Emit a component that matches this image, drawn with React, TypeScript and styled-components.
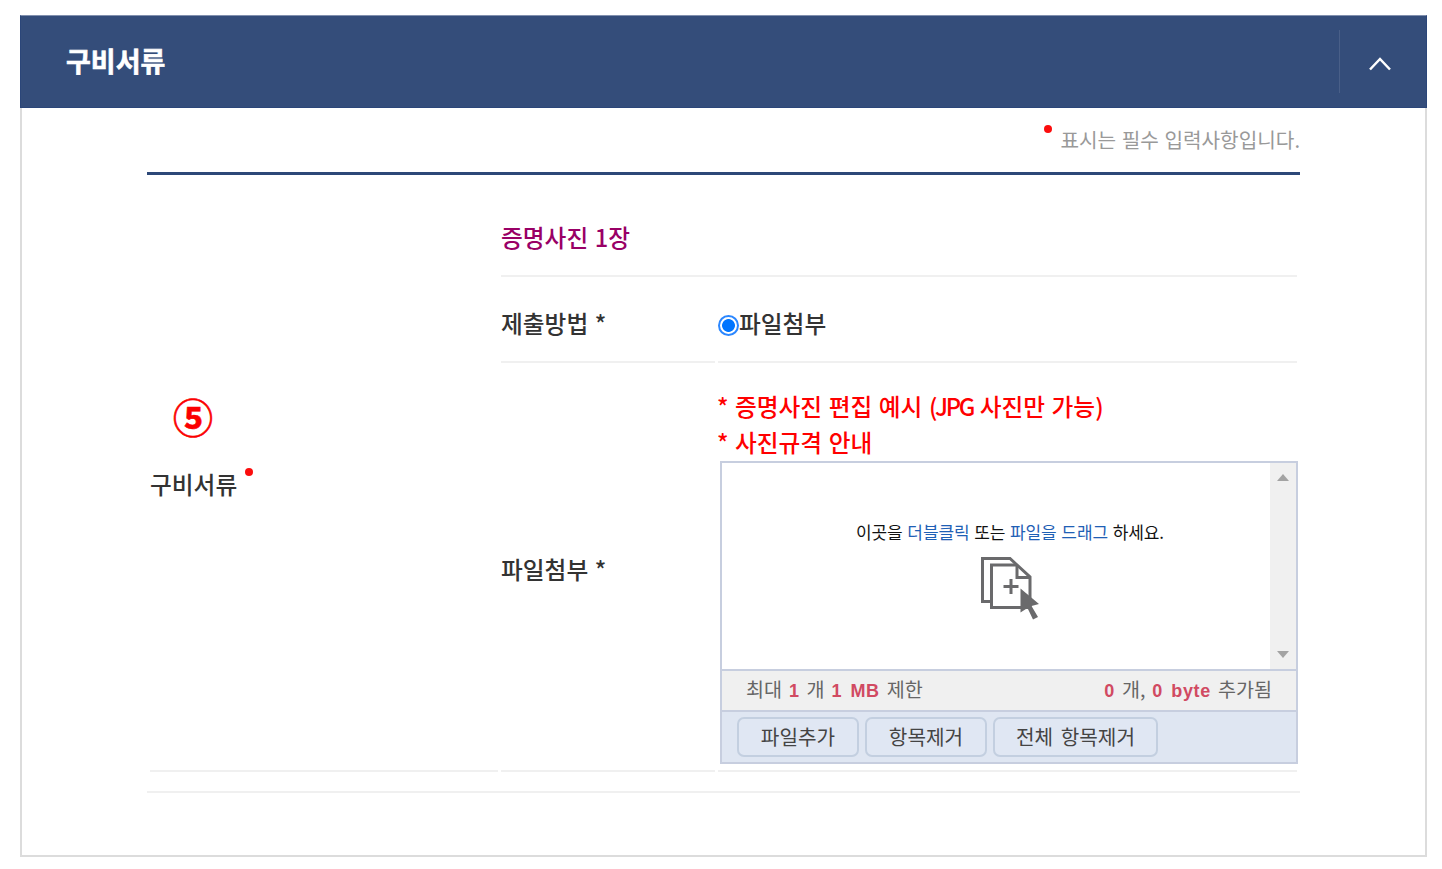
import React, { useState } from "react";
import styled, { createGlobalStyle } from "styled-components";

interface ILabel {
  color?: string;
}

interface ICell {
  area: string;
}

interface IToolButton {
  width: number;
}

const GlobalStyle = createGlobalStyle`
  * {
    box-sizing: border-box;
  }
  body {
    margin: 0;
    background: #fff;
    font-family: "Noto Sans CJK KR", sans-serif;
    color: #333;
  }
`;

const Page = styled.div`
  height: 869px;
  padding: 15px 15px 12px 20px;
`;

const Panel = styled.section`
  display: flex;
  flex-direction: column;
  width: 1407px;
  height: 842px;
`;

const PanelHeader = styled.header`
  display: flex;
  align-items: center;
  justify-content: space-between;
  height: 93px;
  padding-left: 45px;
  background: #344d7a;
  border: 1px solid #2b4679;
  border-top-color: #8190ae;
`;

const PanelTitle = styled.h2`
  margin: 0;
  padding-bottom: 2px;
  font-size: 27px;
  font-weight: 700;
  line-height: 40px;
  color: #fff;
  -webkit-text-stroke: 0.6px #fff;
`;

const ToggleButton = styled.button`
  display: flex;
  align-items: center;
  justify-content: center;
  width: 87px;
  height: 63px;
  padding: 5px 6px 0 0;
  background: none;
  border: 0;
  border-left: 1px solid #495f88;
  cursor: pointer;
`;

const PanelBody = styled.div`
  flex: 1;
  padding: 0 125px 0 125px;
  border: 2px solid #dcdcdc;
  border-top: 0;
`;

const RequiredNote = styled.p`
  display: flex;
  justify-content: flex-end;
  height: 64px;
  margin: 0;
  padding-top: 16px;
  font-size: 20.2px;
  line-height: 32px;
  word-spacing: 1px;
  color: #999;
`;

const Dot = styled.i`
  display: inline-block;
  width: 8px;
  height: 8px;
  margin: 1px 8px 0;
  border-radius: 50%;
  background: #fb0d0d;
`;

const FormTable = styled.div`
  display: grid;
  grid-template-columns: 348px 214px 579px;
  grid-template-rows: 102px 83px 406px;
  grid-template-areas:
    "title doc doc"
    "title methodLabel method"
    "title fileLabel file";
  column-gap: 3px;
  row-gap: 3px;
  height: 621px;
  padding: 0 3px;
  border-top: 3px solid #2d4878;
  border-bottom: 2px solid #f0f0f0;
`;

const Cell = styled.div`
  grid-area: ${(props: ICell) => props.area};
  display: flex;
  align-items: center;
  position: relative;
  border-bottom: 2px solid #f0f0f0;
`;

const TitleCell = styled(Cell)`
  padding-top: 22px;
`;

const DocCell = styled(Cell)`
  padding-top: 23px;
`;

const MethodCell = styled(Cell)`
  padding-top: 4px;
`;

const FileLabelCell = styled(Cell)`
  padding-top: 2px;
`;

const FileCell = styled(Cell)`
  flex-direction: column;
  align-items: flex-start;
  padding-top: 22px;
`;

const Label = styled.span`
  font-size: 23.7px;
  font-weight: 500;
  line-height: 36px;
  word-spacing: 1.2px;
  white-space: pre;
  color: ${(props: ILabel) => props.color || "#333"};
`;

const Notice = styled(Label)`
  margin-left: -1px;
  color: #ff0000;
`;

const Narrow = styled.span`
  letter-spacing: -2.3px;
`;

const TitleDot = styled(Dot)`
  margin: -24px 0 0 8px;
`;

const StepMark = styled.span`
  position: absolute;
  top: 211px;
  left: 23px;
  font-size: 40px;
  font-weight: 700;
  line-height: 60px;
  color: #fb0000;
  -webkit-text-stroke: 0.6px #fb0000;
`;

const Radio = styled.input`
  appearance: none;
  width: 21px;
  height: 21px;
  margin: 5px 0 0 0;
  border: 2px solid #2b87ff;
  border-radius: 50%;
  background: radial-gradient(circle, #0075ff 6px, #fff 6.8px);
`;

const Uploader = styled.div`
  display: flex;
  flex-direction: column;
  width: 578px;
  height: 303px;
  margin: 1px 0 0 2px;
  border: 2px solid #c7cedf;
`;

const DropArea = styled.div`
  display: flex;
  height: 206px;
`;

const DropContent = styled.div`
  display: flex;
  flex: 1;
  flex-direction: column;
  align-items: center;
  padding: 55px 0 0 28px;
`;

const DropText = styled.p`
  margin: 0;
  font-size: 17px;
  line-height: 28px;
  letter-spacing: -0.1px;
  word-spacing: 1px;
  white-space: pre;
  color: #111;

  em {
    font-style: normal;
    color: #1f60b5;
  }
`;

const DropIcon = styled.svg`
  margin-top: 9px;
`;

const Scrollbar = styled.div`
  display: flex;
  flex-direction: column;
  align-items: center;
  justify-content: space-between;
  width: 26px;
  padding: 11px 0;
  background: #f0f0f0;
`;

const StatusBar = styled.div`
  display: flex;
  align-items: center;
  justify-content: space-between;
  height: 43px;
  padding: 0 24px 2px;
  background: #f0f0f0;
  border-top: 2px solid #c7cedf;
  border-bottom: 2px solid #c7cedf;
  font-size: 19.6px;
  line-height: 30px;
  word-spacing: 2.5px;
  white-space: pre;
  color: #666;

  b {
    font-family: "Liberation Sans", sans-serif;
    font-size: 18px;
    font-weight: 700;
    color: #d14a62;
    letter-spacing: 0.7px;
  }
`;

const Toolbar = styled.div`
  display: flex;
  flex: 1;
  gap: 6px;
  padding: 5px 15px;
  background: #dfe6f2;
`;

const ToolButton = styled.button`
  width: ${(props: IToolButton) => props.width}px;
  height: 40px;
  padding: 0;
  border: 2px solid #c3cfe0;
  border-radius: 7px;
  background: #e0e7f3;
  font-family: inherit;
  font-size: 20.2px;
  line-height: 34px;
  word-spacing: 3px;
  color: #444;
`;

const CopyIcon: React.FC = () => (
  <DropIcon width="60" height="66" viewBox="0 0 60 66" fill="none">
    <g stroke="#6a6a6c" strokeWidth="3">
      <path d="M11 46.500H2.500V3.500H30L36.500 9.500" />
      <path d="M11.500 10H37L50 22V52.500H11.500Z" />
      <path d="M37 10V22.500H50" />
      <path d="M31 24V39M23.500 31.500H38.500" />
    </g>
    <path
      d="M40.500 33.500L59 49L51.500 51L58 62L53 64.500L47.500 53L40.500 57.500Z"
      fill="#6a6a6c"
    />
  </DropIcon>
);

const App: React.FC = () => {
  const [isOpen, setIsOpen] = useState(true);

  return (
    <Page>
      <GlobalStyle />
      <Panel>
        <PanelHeader>
          <PanelTitle>구비서류</PanelTitle>
          <ToggleButton onClick={() => setIsOpen(!isOpen)}>
            <svg width="24" height="16" viewBox="0 0 24 16" fill="none">
              <path
                d={isOpen ? "M2 13.500L12 3L22 13.500" : "M2 3L12 13.500L22 3"}
                stroke="#fff"
                strokeWidth="2.5"
              />
            </svg>
          </ToggleButton>
        </PanelHeader>
        {isOpen && (
          <PanelBody>
            <RequiredNote>
              <Dot />
              표시는 필수 입력사항입니다.
            </RequiredNote>
            <FormTable>
              <TitleCell area="title">
                <StepMark>⑤</StepMark>
                <Label>구비서류</Label>
                <TitleDot />
              </TitleCell>
              <DocCell area="doc">
                <Label color="#990066">증명사진 1장</Label>
              </DocCell>
              <MethodCell area="methodLabel">
                <Label>제출방법 *</Label>
              </MethodCell>
              <MethodCell area="method">
                <Radio type="radio" defaultChecked />
                <Label>파일첨부</Label>
              </MethodCell>
              <FileLabelCell area="fileLabel">
                <Label>파일첨부 *</Label>
              </FileLabelCell>
              <FileCell area="file">
                <Notice>
                  * 증명사진 편집 예시 <Narrow>(JPG</Narrow> 사진만 가능)
                </Notice>
                <Notice>* 사진규격 안내</Notice>
                <Uploader>
                  <DropArea>
                    <DropContent>
                      <DropText>
                        이곳을 <em>더블클릭</em> 또는 <em>파일을 드래그</em> 하세요.
                      </DropText>
                      <CopyIcon />
                    </DropContent>
                    <Scrollbar>
                      <svg width="12" height="7">
                        <path d="M0 7L6 0L12 7Z" fill="#a3a3a3" />
                      </svg>
                      <svg width="12" height="7">
                        <path d="M0 0L6 7L12 0Z" fill="#a3a3a3" />
                      </svg>
                    </Scrollbar>
                  </DropArea>
                  <StatusBar>
                    <span>
                      최대 <b>1</b> 개 <b>1 MB</b> 제한
                    </span>
                    <span>
                      <b>0</b> 개, <b>0 byte</b> 추가됨
                    </span>
                  </StatusBar>
                  <Toolbar>
                    <ToolButton width={122}>파일추가</ToolButton>
                    <ToolButton width={122}>항목제거</ToolButton>
                    <ToolButton width={165}>전체 항목제거</ToolButton>
                  </Toolbar>
                </Uploader>
              </FileCell>
            </FormTable>
          </PanelBody>
        )}
      </Panel>
    </Page>
  );
};

export default App;
